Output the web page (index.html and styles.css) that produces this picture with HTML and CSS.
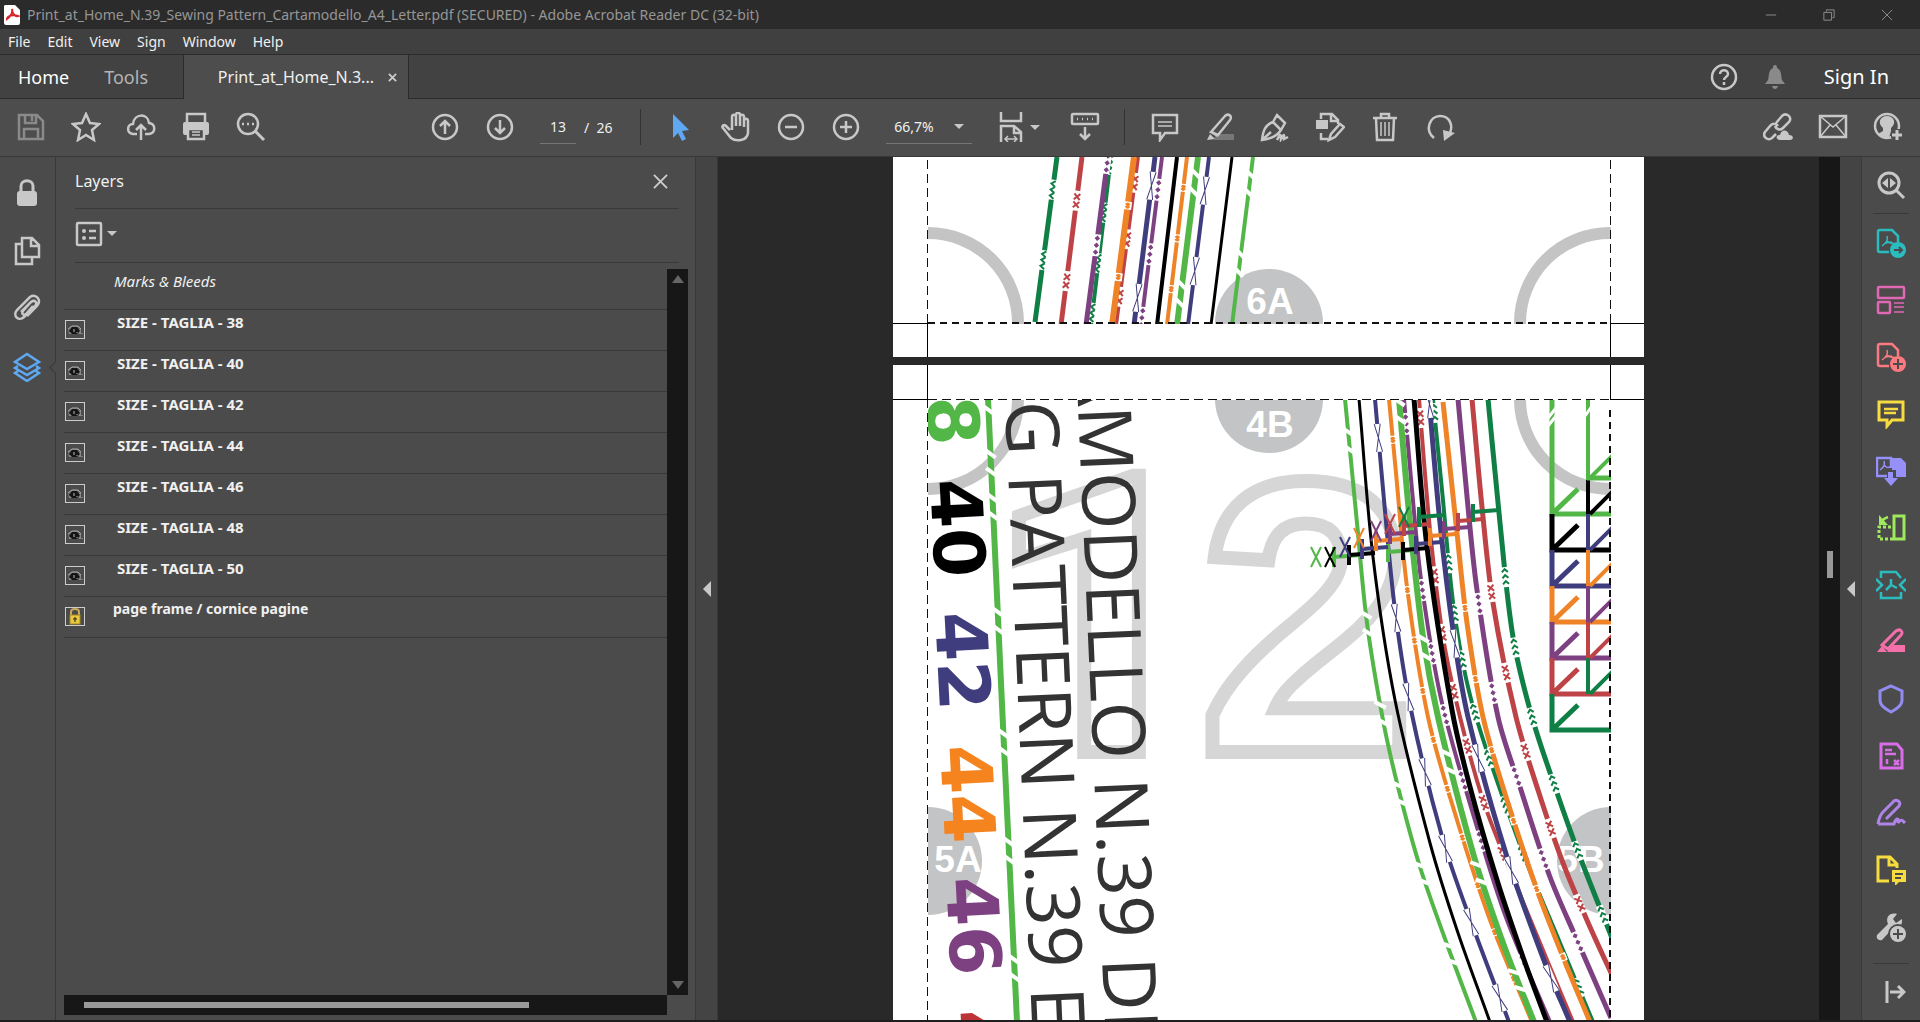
FILE: index.html
```html
<!DOCTYPE html>
<html lang="en">
<head>
    <meta charset="UTF-8">
    <meta name="viewport" content="width=device-width, initial-scale=1.0">
    <title>Print_at_Home_N.39_Sewing Pattern_Cartamodello_A4_Letter.pdf</title>
    <link rel="stylesheet" href="styles.css">
</head>
<body>
    <svg class="defs" aria-hidden="true">
        <symbol id="eye" viewBox="0 0 18 17">
            <path d="M2 11V8l3-3h7l3 3v5H3z" fill="#666"/>
            <path d="M2 8l4-3h6l3 3M3 12h8M14 8v5M16 12v1" stroke="#aaa" fill="none"/>
            <path d="M3 10l3-4h5l3 4-3 3H6z" fill="#151515"/>
            <path d="M8 8v3M11 11v1" stroke="#bbb"/>
        </symbol>
        <symbol id="pdf" viewBox="0 0 30 30">
            <path d="M13 24H4a2 2 0 0 1-2-2V4a2 2 0 0 1 2-2h12l6 6v6"/>
            <path class="thin" d="M11 8c1 4 0 6-5 10M11 13c2 2 4 3 7 2M8 16c3-2 5-2 8-2"/>
        </symbol>
    </svg>

    <header class="title-bar">
        <svg class="app-icon" viewBox="0 0 16 20"><path d="M1 0h10l5 5v13a2 2 0 0 1-2 2H2a2 2 0 0 1-2-2V1z" fill="#fff"/><path d="M8 4c1 4-1 7-5 10 0-3 6-5 11-3-3 1-6-3-6-7z" fill="none" stroke="#d8252a" stroke-width="2"/></svg>
        <span>Print_at_Home_N.39_Sewing Pattern_Cartamodello_A4_Letter.pdf (SECURED) - Adobe Acrobat Reader DC (32-bit)</span>
        <div class="window-buttons">
            <button aria-label="Minimize"><svg viewBox="0 0 14 14"><path d="M1 7h12"/></svg></button>
            <button aria-label="Restore"><svg viewBox="0 0 14 14"><path d="M1 4h9v9H1zM4 3V1h9v9h-2"/></svg></button>
            <button aria-label="Close"><svg viewBox="0 0 14 14"><path d="M1 1l12 12M13 1L1 13"/></svg></button>
        </div>
    </header>

    <nav class="menu-bar">
        <button>File</button>
        <button>Edit</button>
        <button>View</button>
        <button>Sign</button>
        <button>Window</button>
        <button>Help</button>
    </nav>

    <div class="tab-bar">
        <div class="main-tabs">
            <button class="current">Home</button>
            <button>Tools</button>
        </div>
        <div class="doc-tab">
            <span>Print_at_Home_N.3...</span>
            <button aria-label="Close tab"><svg viewBox="0 0 10 10"><path d="M1 1l8 8M9 1L1 9"/></svg></button>
        </div>
        <div class="account">
            <button aria-label="Help"><svg class="icon" viewBox="0 0 30 30"><circle cx="15" cy="15" r="12"/><path d="M11 12c0-5 8-5 8 0 0 3-4 3-4 6M15 20v3"/></svg></button>
            <button aria-label="Notifications"><svg class="icon dim" viewBox="0 0 30 30"><path class="solid" d="M15 3c2 0 2 2 2 3 5 2 4 9 5 12l3 4H5l3-4c1-3 0-10 5-12 0-1 0-3 2-3zM12 24h6c-1 4-5 4-6 0z"/></svg></button>
            <button class="sign-in">Sign In</button>
        </div>
    </div>

    <div class="toolbar">
        <button aria-label="Save"><svg class="icon dim" viewBox="0 0 30 30"><path d="M3 3h18l6 6v18H3zM9 3v8h11V3M8 27V17h14v10M16 4v5"/></svg></button>
        <button aria-label="Star"><svg class="icon" viewBox="0 0 30 30"><path d="M15 2l4 9 9 1-7 6 2 10-8-5-8 5 2-10-7-6 9-1z"/></svg></button>
        <button aria-label="Upload"><svg class="icon" viewBox="0 0 30 30"><path d="M11 22H7c-7-1-6-10 0-10 1-11 15-11 16-1 7 1 7 10 0 11h-4M15 28V14M10 18l5-5 5 5"/></svg></button>
        <button aria-label="Print"><svg class="icon" viewBox="0 0 30 30"><path d="M6 10V2h18v8"/><path class="solid" d="M2 12a2 2 0 0 1 2-2h22a2 2 0 0 1 2 2v9a2 2 0 0 1-2 2h-2v-6H6v6H4a2 2 0 0 1-2-2z"/><path d="M7 17h16v10H7z"/><path class="thin" d="M11 20h8M11 23h8"/></svg></button>
        <button aria-label="Find"><svg class="icon" viewBox="0 0 30 30"><circle cx="12" cy="12" r="10"/><path class="heavy" d="M19 19l9 9"/><path d="M6 12h2M11 12h2M16 12h2"/></svg></button>
        <button class="page-up" aria-label="Previous page"><svg class="icon" viewBox="0 0 30 30"><circle cx="15" cy="15" r="12"/><path d="M15 22V9M10 14l5-5 5 5"/></svg></button>
        <button aria-label="Next page"><svg class="icon" viewBox="0 0 30 30"><circle cx="15" cy="15" r="12"/><path d="M15 8v13M10 16l5 5 5-5"/></svg></button>
        <input class="page-number" aria-label="Page number" value="13">
        <span class="page-total">/&nbsp; 26</span>
        <i class="divider"></i>
        <button aria-label="Select"><svg class="icon blue" viewBox="0 0 30 30"><path class="solid" d="M7 2l16 16-7 1 4 8-4 2-4-8-5 5z"/></svg></button>
        <button aria-label="Pan"><svg class="icon" viewBox="0 0 30 30"><path d="M9 18L5 14c-2-2-5 0-3 2l8 10c5 4 16 3 17-5V9c0-3-4-3-4 0v6V5c0-3-4-3-4 0v9V3c0-3-4-3-4 0v11V5c0-3-4-3-4 0v13"/></svg></button>
        <button aria-label="Zoom out"><svg class="icon" viewBox="0 0 30 30"><circle cx="15" cy="15" r="12"/><path d="M9 15h12"/></svg></button>
        <button aria-label="Zoom in"><svg class="icon" viewBox="0 0 30 30"><circle cx="15" cy="15" r="12"/><path d="M9 15h12M15 9v12"/></svg></button>
        <button class="zoom-level">66,7%<i class="caret"></i></button>
        <button class="fit" aria-label="Fit width"><svg class="icon" viewBox="0 0 30 30"><path d="M5 0v9h20V0M5 30V14h13l7 6v10M18 14v7h7"/><path class="thin" d="M9 27h12M12 24l-3 3 3 3M18 24l3 3-3 3"/></svg><i class="caret"></i></button>
        <button aria-label="Read mode"><svg class="icon" viewBox="0 0 30 30"><rect x="2" y="2" width="26" height="10" rx="1"/><path d="M7 7h1M12 7h1M17 7h1M22 7h1M15 15v12M10 22l5 5 5-5"/></svg></button>
        <i class="divider late"></i>
        <button aria-label="Comment"><svg class="icon" viewBox="0 0 30 30"><path d="M3 3h24v18H15l-5 7v-7H3z"/><path class="thin" d="M8 10h14M8 14h14"/></svg></button>
        <button aria-label="Highlight"><svg class="icon" viewBox="0 0 30 30"><path class="faint" d="M11 22h18v6H9z"/><path d="M6 20L20 4c3-3 8 0 5 4L13 23zM6 20l7 4"/><path class="solid" d="M5 22l5 5-8 1z"/></svg></button>
        <button aria-label="Sign"><svg class="icon" viewBox="0 0 30 30"><path d="M2 28C3 19 5 13 13 10l8 8c-4 6-9 9-19 10zM2 28l9-8M13 10l4-7 8 8-4 7M17 28c4-8 4-5 4-1 4-7 3-3 3 0l4-2"/></svg></button>
        <button aria-label="Edit pages"><svg class="icon" viewBox="0 0 30 30"><path class="solid" d="M1 8h12v9H1z"/><path d="M6 7V2h11l6 6v4M16 2v7h7M6 21v6h7M14 28l2-6 9-10 4 3-9 10z"/></svg></button>
        <button aria-label="Delete"><svg class="icon" viewBox="0 0 30 30"><path d="M3 6h24M11 6V2h8v4M6 6l1 22h16l1-22"/><path class="thin" d="M11 10v14M15 10v14M19 10v14"/></svg></button>
        <button aria-label="Rotate"><svg class="icon" viewBox="0 0 30 30"><path d="M9 26C-1 18 5 4 15 4c10 0 14 10 9 19"/><path class="solid" d="M18 18l12 3-11 8z"/></svg></button>
        <div class="share">
            <button aria-label="Share link"><svg class="icon" viewBox="0 0 30 30"><path d="M13 11l6-7c4-4 11 1 7 6l-6 6c-3 3-7 1-8-2M15 14c-2-3-6-3-8 0l-5 6c-3 5 3 9 7 6l4-4"/><path class="solid" d="M17 28c-5 0-4-6 0-5 1-6 8-6 9 0 5 0 5 5 1 5z"/></svg></button>
            <button aria-label="Mail"><svg class="icon" viewBox="0 0 30 30"><rect x="2" y="4" width="26" height="21"/><path class="thin" d="M2 4l13 11L28 4M2 25l10-12M28 25L18 13"/></svg></button>
            <button aria-label="Add people"><svg class="icon" viewBox="0 0 30 30"><circle cx="14" cy="14" r="12"/><path class="solid" d="M5 22l5-3v-3c-6-5-3-12 4-12s10 7 4 12v3l-2 7H9z"/><path class="halo" d="M24 17v12M18 23h12"/><path class="heavy" d="M24 18v10M19 23h10"/></svg></button>
        </div>
    </div>

    <main>
        <nav class="left-rail">
            <button aria-label="Security"><svg class="icon" viewBox="0 0 30 30"><path class="heavy" d="M9 14V8c0-7 12-7 12 0v6"/><rect class="solid" x="5" y="13" width="20" height="15" rx="3"/></svg></button>
            <button aria-label="Pages"><svg class="icon" viewBox="0 0 30 30"><path d="M10 2h10l7 7v12H10zM19 2v8h8M9 8H4v20h16v-6"/></svg></button>
            <button aria-label="Attachments"><svg class="icon" viewBox="0 0 30 30"><path d="M9 18L19 8c4-3 7 1 4 4L12 23c-5 5-12-1-7-7L18 3c6-4 12 3 7 9L15 22M19 8l-8 9c-2 3 1 5 3 3l7-8"/></svg></button>
            <button class="selected" aria-label="Layers"><svg class="icon blue" viewBox="0 0 30 30"><path d="M15 2l12 8-12 7L3 10zM6 14l-3 2 12 7 12-7-3-2M6 19l-3 2 12 8 12-8-3-2"/></svg></button>
        </nav>

        <aside class="panel">
            <div class="panel-title">
                <h2>Layers</h2>
                <button aria-label="Close panel"><svg viewBox="0 0 16 16"><path d="M1 1l14 14M15 1L1 15"/></svg></button>
            </div>
            <div class="panel-options">
                <button aria-label="Options"><svg class="icon" viewBox="0 0 30 30"><rect x="3" y="4" width="24" height="22" rx="1"/><circle class="solid" cx="10" cy="12" r="2"/><circle class="solid" cx="10" cy="19" r="2"/><path d="M15 12h7M15 19h7"/></svg><i class="caret"></i></button>
            </div>
            <div class="panel-body">
                <ul class="layers">
                    <li class="bleeds">Marks &amp; Bleeds</li>
                    <li><button aria-label="Toggle layer"><svg><use href="#eye"/></svg></button><span>SIZE - TAGLIA - 38</span></li>
                    <li><button aria-label="Toggle layer"><svg><use href="#eye"/></svg></button><span>SIZE - TAGLIA - 40</span></li>
                    <li><button aria-label="Toggle layer"><svg><use href="#eye"/></svg></button><span>SIZE - TAGLIA - 42</span></li>
                    <li><button aria-label="Toggle layer"><svg><use href="#eye"/></svg></button><span>SIZE - TAGLIA - 44</span></li>
                    <li><button aria-label="Toggle layer"><svg><use href="#eye"/></svg></button><span>SIZE - TAGLIA - 46</span></li>
                    <li><button aria-label="Toggle layer"><svg><use href="#eye"/></svg></button><span>SIZE - TAGLIA - 48</span></li>
                    <li><button aria-label="Toggle layer"><svg><use href="#eye"/></svg></button><span>SIZE - TAGLIA - 50</span></li>
                    <li class="frame"><button aria-label="Locked layer"><svg viewBox="0 0 18 17"><path d="M5 8V4c0-4 8-4 8 0v4" fill="none" stroke="#c9a95a" stroke-width="2"/><rect x="4" y="7" width="10" height="9" fill="#e8c93c" stroke="#a58a26"/><path d="M9 9v5M7 11h4" stroke="#222"/></svg></button><span>page frame / cornice pagine</span></li>
                </ul>
                <div class="scroll-y"><i class="up"></i><i class="down"></i></div>
                <div class="scroll-x"><i></i></div>
            </div>
        </aside>

        <button class="splitter" aria-label="Collapse panel"><i></i></button>

        <section class="document">
            <svg class="page" id="page13" width="751" height="200" viewBox="893 157 751 200">
                <clipPath id="clip13"><rect x="928" y="150" width="683" height="174"/></clipPath>
                <g clip-path="url(#clip13)">
                    <circle class="ring" cx="928" cy="323" r="90"/>
                    <circle class="ring" cx="1610" cy="323" r="90"/>
                    <circle class="disc" cx="1269" cy="323" r="54"/>
                    <g class="lines"></g>
                    <text class="mark" x="1270" y="314">6A</text>
                </g>
                <path class="cut" d="M927.500 160V323M1610.500 160V323"/>
                <path class="cut bold" d="M928 323H1611"/>
                <path class="crop" d="M893 323.500h35M1610 323.500h34M927.500 323v34M1610.500 323v34"/>
            </svg>
            <svg class="page" id="page14" width="751" height="655" viewBox="893 365 751 655">
                <clipPath id="clip14"><rect x="928" y="400" width="683" height="620"/></clipPath>
                <g clip-path="url(#clip14)">
                    <circle class="ring" cx="928" cy="399" r="90"/>
                    <circle class="ring" cx="1610" cy="399" r="90"/>
                    <circle class="disc" cx="1269" cy="399" r="54"/>
                    <circle class="disc" cx="928" cy="861" r="54"/>
                    <circle class="disc" cx="1611" cy="861" r="54"/>
                    <text class="mark" x="1270" y="437">4B</text>
                    <text class="mark" x="958" y="872">5A</text>
                    <text class="mark" x="1581" y="872">5B</text>
                    <text class="sheet one" x="987" y="752">1</text>
                    <text class="sheet" x="1199" y="752">2</text>
                    <g class="legend"></g>
                    <g class="lines"></g>
                    <text class="size" fill="#53b748" transform="translate(924 348) rotate(87)">38</text>
                    <text class="size" fill="#000" transform="translate(930 480) rotate(87)">40</text>
                    <text class="size" fill="#403d7e" transform="translate(935 613) rotate(87)">42</text>
                    <text class="size" fill="#f5841f" transform="translate(940 746) rotate(87)">44</text>
                    <text class="size" fill="#7d4182" transform="translate(946 878) rotate(87)">46</text>
                    <text class="size" fill="#bd3438" transform="translate(951 1011) rotate(87)">48</text>
                    <text class="pattern" transform="translate(1005 402) rotate(87.500)">G PATTERN N.39 E</text>
                    <text class="pattern" transform="translate(1076 360) rotate(87.500)">AMODELLO N.39 DI</text>
                </g>
                <path class="cut" d="M927.500 399V1020M928 399.500H1611"/>
                <path class="cut bold" d="M1610 410V1020"/>
                <path class="crop" d="M893 399.500h35M1610 399.500h34M927.500 365v34M1610.500 365v34"/>
            </svg>
        </section>

        <div class="doc-scroll"><i></i></div>
        <button class="splitter" aria-label="Collapse tools"><i></i></button>

        <nav class="right-rail">
            <button class="first" aria-label="Search tools"><svg class="icon" viewBox="0 0 30 30"><circle class="heavy" cx="13" cy="13" r="10"/><path class="heavy" d="M20 20l8 8"/><path class="solid" d="M12 8v10l-6-5zM14 8v10l6-5z"/></svg></button>
            <button class="teal" aria-label="Export PDF"><svg class="icon" viewBox="0 0 30 30"><use href="#pdf"/><circle class="solid" cx="22" cy="22" r="8"/><path class="cutout" d="M18 22h8M23 19l3 3-3 3"/></svg></button>
            <button class="pink" aria-label="Organize pages"><svg class="icon" viewBox="0 0 30 30"><rect x="2" y="2" width="26" height="11" rx="1"/><rect x="2" y="17" width="12" height="11" rx="1"/><path class="thin" d="M18 18h10M18 22h10M18 27h10"/></svg></button>
            <button class="coral" aria-label="Create PDF"><svg class="icon" viewBox="0 0 30 30"><use href="#pdf"/><circle class="solid" cx="22" cy="22" r="8"/><path class="cutout" d="M17 22h10M22 17v10"/></svg></button>
            <button class="yellow" aria-label="Comment tool"><svg class="icon" viewBox="0 0 30 30"><path class="heavy" d="M3 3h24v18H16l-5 6v-6H3z"/><path d="M8 10h14M8 14h12"/></svg></button>
            <button class="violet" aria-label="Combine files"><svg class="icon" viewBox="0 0 30 30"><path d="M11 20H1V2h14v10"/><path class="thin" d="M8 5c1 4 0 6-4 9M8 9c2 2 3 3 6 2"/><path class="solid" d="M16 2h9l5 5v14H20v-7h-4zM12 16h5v6h5l-7 8-7-8h4z"/></svg></button>
            <button class="lime" aria-label="Compress"><svg class="icon" viewBox="0 0 30 30"><rect class="heavy" x="18" y="3" width="10" height="23"/><path class="dotted heavy" d="M15 14H3v12h14"/><path d="M5 9c2-3 4-4 7-5"/><path class="solid" d="M3 2v10h9z"/></svg></button>
            <button class="teal" aria-label="Compress PDF"><svg class="icon" viewBox="0 0 30 30"><path d="M5 8V2h15l5 6M5 22v6h20v-6M0 9l6 6-6 6M30 9l-6 6 6 6M15 9v6l-5 5M15 15l6 3"/></svg></button>
            <button class="rose" aria-label="Redact"><svg class="icon" viewBox="0 0 30 30"><path class="solid" d="M17 18h12v7H11zM1 25l5-6 5 6z"/><path class="heavy" d="M6 18L20 4c4-3 8 1 5 4L12 22z"/></svg></button>
            <button class="indigo" aria-label="Protect"><svg class="icon" viewBox="0 0 30 30"><path class="heavy" d="M15 2l11 5v9c0 6-6 9-11 12C10 25 4 22 4 16V7z"/></svg></button>
            <button class="orchid" aria-label="Prepare form"><svg class="icon" viewBox="0 0 30 30"><path class="heavy" d="M5 3h16l5 6v18H5z"/><path d="M9 9h7M9 13h11M18 19l5 5M23 19l-5 5M11 18v5"/></svg></button>
            <button class="lilac" aria-label="Fill and sign"><svg class="icon" viewBox="0 0 30 30"><path class="heavy" d="M2 26c1-6 2-9 5-12L17 4c3-4 9 0 6 4L10 21M2 26h16c2-6 5-7 4-1 3-5 5-2 7 0"/></svg></button>
            <button class="yellow" aria-label="Send for comments"><svg class="icon" viewBox="0 0 30 30"><path class="heavy" d="M13 26H2V2h12l7 7v4M13 2v8h8"/><path class="solid" d="M16 15h14v12h-7l-4 4v-4h-3z"/><path class="cutout" d="M19 19h8M19 23h6"/></svg></button>
            <button aria-label="More tools"><svg class="icon" viewBox="0 0 30 30"><path class="solid" d="M1 23L12 12C9 5 14 0 21 2l-4 5 3 4 6-4c1 7-4 10-9 9L6 28c-4 1-6-2-5-5z"/><circle class="cutout" cx="22" cy="22" r="9"/><circle class="solid" cx="22" cy="22" r="8"/><path class="cutout" d="M17 22h10M22 17v10"/></svg></button>
            <button class="last" aria-label="Expand pane"><svg class="icon" viewBox="0 0 30 30"><path class="heavy" d="M11 4v22M14 15h14M22 9l6 6-6 6"/></svg></button>
        </nav>
    </main>

    <script>
        const GREEN = '#53b748', DARK = '#0f7f46', RED = '#bd4346', PURPLE = '#7d4182',
              NAVY = '#403d7e', ORANGE = '#ee8427', BLACK = '#000';

        // one motif per garment size, drawn along the x axis
        const motifs = {
            chev: { gap: 20, d: 'M-5 -3L-8 0L-5 3M1 -3L-2 0L1 3M7 -3L4 0L7 3' },
            side: { gap: 20, d: 'M-9 -2L-6 2L-3 -2M-3 -2L0 2L3 -2M3 -2L6 2L9 -2' },
            xx: { gap: 20, d: 'M-7 -3L-1 3M-1 -3L-7 3M1 -3L7 3M7 -3L1 3' },
            dots: { gap: 22, d: 'M-9 0l2 -2l2 2l-2 2zM-2 0l2 -2l2 2l-2 2zM5 0l2 -2l2 2l-2 2z', fill: true },
            star: { gap: 8, d: 'M-3 0H3M-2 -2L2 2M-2 2L2 -2' },
            cross: { gap: 28, d: 'M-14 -3L14 3M-14 3L14 -3', w: 1 },
            slash: { slash: true }
        };

        function make(parent, name, attrs) {
            const el = document.createElementNS('http://www.w3.org/2000/svg', name);
            for (const k in attrs) el.setAttribute(k, attrs[k]);
            parent.appendChild(el);
            return el;
        }

        // smooth path through the points, which all run down the page
        function curve(p) {
            const slope = i => {
                const a = Math.max(i - 2, 0), b = Math.min(i + 2, p.length - 2);
                return (p[b] - p[a]) / (p[b + 1] - p[a + 1]);
            };
            let d = `M${p[0]} ${p[1]}`;
            for (let i = 0; i + 3 < p.length; i += 2) {
                const h = (p[i + 3] - p[i + 1]) / 3;
                d += `C${p[i] + slope(i) * h} ${p[i + 1] + h} ${p[i + 2] - slope(i + 2) * h} ${p[i + 3] - h} ${p[i + 2]} ${p[i + 3]}`;
            }
            return d;
        }

        function drawLine(g, [color, width, points, type, ys]) {
            const path = make(g, 'path', { d: curve(points), stroke: color, 'stroke-width': width });
            if (!type) return;
            const m = motifs[type], total = path.getTotalLength();
            ys.forEach(y => {
                let len = 2;
                while (len < total && path.getPointAtLength(len).y < y) len += 1;
                const p = path.getPointAtLength(len), q = path.getPointAtLength(len - 2);
                const angle = Math.atan2(p.y - q.y, p.x - q.x) * 180 / Math.PI;
                const mark = make(g, 'g', { transform: `translate(${p.x} ${p.y}) rotate(${angle})` });
                if (m.slash) {
                    make(mark, 'path', { d: 'M-13 5L-5 -5M5 5L13 -5', stroke: '#fff', 'stroke-width': 4 });
                    return;
                }
                make(mark, 'path', { d: `M${-m.gap / 2} 0h${m.gap}`, stroke: '#fff', 'stroke-width': width + 2 });
                const motif = make(mark, 'path', { d: m.d, stroke: color, 'stroke-width': m.w || (m.fill ? 1 : 2) });
                if (m.fill) motif.style.fill = color;
            });
        }

        const top13 = [
            [DARK, 5, [1057, 157, 1035, 322], 'side', [189, 260]],
            [RED, 5, [1082, 157, 1061, 325], 'xx', [200, 281]],
            [DARK, 4, [1111, 157, 1091, 325], 'side', [164, 212, 263, 312]],
            [PURPLE, 5, [1108, 157, 1086, 325], 'dots', [162, 245]],
            [RED, 4, [1138, 157, 1116, 325], 'xx', [182, 239, 296]],
            [ORANGE, 6, [1134, 157, 1112, 325], 'star', [205, 276]],
            [NAVY, 5, [1155, 157, 1134, 325], 'cross', [185, 297]],
            [PURPLE, 4, [1162, 157, 1141, 325], 'dots', [189, 254, 317]],
            [BLACK, 4, [1177, 157, 1157, 325]],
            [ORANGE, 4, [1187, 157, 1167, 325], 'star', [187, 238, 289]],
            [GREEN, 6, [1198, 157, 1177, 325], 'slash', [182, 293]],
            [NAVY, 4, [1209, 157, 1188, 325], 'cross', [190, 271]],
            [BLACK, 3, [1232, 157, 1211, 325]],
            [GREEN, 4, [1253, 157, 1232, 325], 'slash', [183, 263]]
        ];

        const main14 = [
            [GREEN, 6, [988, 399, 1001, 683, 1017, 1022], 'slash', [396, 462, 506, 620, 742, 850, 968]],
            [GREEN, 4, [1345, 399, 1357, 523, 1367, 623, 1383, 720, 1398, 787, 1420, 867, 1448, 947, 1476, 1022], 'slash', [440, 623, 713, 793, 873, 953]],
            [BLACK, 3, [1359, 399, 1373, 557, 1395, 700, 1430, 843, 1457, 930, 1490, 1022]],
            [NAVY, 4, [1375, 399, 1384, 500, 1395, 610, 1411, 710, 1443, 840, 1473, 927, 1509, 1022], 'cross', [437, 617, 697, 772, 848, 922, 997]],
            [ORANGE, 4, [1389, 399, 1396, 473, 1407, 587, 1428, 717, 1457, 820, 1490, 920, 1532, 1022], 'star', [439, 590, 640, 690, 739, 788, 837, 885, 932, 978]],
            [PURPLE, 4, [1404, 399, 1412, 490, 1422, 587, 1442, 703, 1480, 837, 1507, 920, 1550, 1022], 'dots', [423, 590, 653, 715, 780, 840, 963]],
            [GREEN, 6, [1399, 399, 1410, 523, 1423, 637, 1438, 717, 1473, 853, 1503, 943, 1534, 1022], 'slash', [410, 647, 762, 873, 980]],
            [RED, 4, [1419, 399, 1430, 530, 1443, 637, 1460, 717, 1482, 797, 1503, 853, 1547, 960, 1573, 1022], 'xx', [417, 576, 633, 691, 746, 802, 853]],
            [BLACK, 5, [1414, 399, 1427, 547, 1452, 710, 1470, 787, 1497, 880, 1523, 957, 1547, 1022]],
            [DARK, 4, [1433, 399, 1442, 490, 1455, 617, 1474, 710, 1523, 853, 1560, 943, 1593, 1022], 'chev', [412, 563, 613, 660, 712, 758, 805, 853, 987]],
            [NAVY, 5, [1429, 399, 1440, 523, 1453, 630, 1468, 717, 1507, 857, 1545, 963, 1570, 1022], 'cross', [403, 643, 758, 870, 978]],
            [ORANGE, 5, [1443, 402, 1457, 533, 1467, 623, 1483, 717, 1507, 800, 1537, 890, 1563, 957, 1590, 1022], 'star', [607, 679, 750, 820, 889, 957]],
            [PURPLE, 5, [1458, 399, 1468, 507, 1477, 590, 1498, 717, 1520, 787, 1550, 877, 1577, 940, 1611, 1018], 'dots', [603, 692, 776, 859, 942]],
            [RED, 5, [1472, 399, 1482, 507, 1493, 603, 1516, 717, 1538, 790, 1563, 863, 1590, 927, 1612, 975], 'xx', [592, 672, 751, 828, 903]],
            [DARK, 5, [1488, 399, 1500, 523, 1513, 637, 1532, 717, 1555, 787, 1580, 857, 1612, 938], 'chev', [577, 647, 717, 783, 850, 915]]
        ];

        const lines13 = document.querySelector('#page13 .lines');
        const lines14 = document.querySelector('#page14 .lines');
        top13.forEach(l => drawLine(lines13, l));
        main14.forEach(l => drawLine(lines14, l));

        // notches and the X that names each of them
        const notches = [
            [GREEN, 1334, 557, 1316, 557], [BLACK, 1349, 555, 1330, 557], [NAVY, 1362, 549, 1345, 547],
            [ORANGE, 1376, 541, 1359, 538], [PURPLE, 1390, 534, 1376, 531], [RED, 1404, 526, 1390, 524],
            [DARK, 1419, 517, 1404, 517]
        ];
        notches.forEach(([color, x, y, lx, ly]) => {
            make(lines14, 'path', { d: `M${lx - 5} ${ly - 10}l10 20m0 -20l-10 20`, stroke: color, 'stroke-width': 2 });
            make(lines14, 'path', { d: `M${x} ${y - 10}v20M${x} ${y}l26 -2`, stroke: color, 'stroke-width': 4 });
            make(lines14, 'path', { d: `M${x + 54} ${y - 13}v18M${x + 54} ${y - 5}l26 -2`, stroke: color, 'stroke-width': 4 });
        });

        const legend = document.querySelector('#page14 .legend');
        const sizes = [GREEN, BLACK, NAVY, ORANGE, PURPLE, RED, DARK];
        sizes.forEach((color, i) => {
            const y = 514 + i * 36, prev = i ? y - 36 : 400;
            const iy = i ? y - 36 : 478, iprev = i > 1 ? iy - 36 : i ? 480 : 400;
            make(legend, 'path', { d: `M1588 ${iprev}V${i ? iy : 480}M1590 ${iy}l24 -24`, stroke: color, 'stroke-width': 4 });
            make(legend, 'path', { d: `M1552 ${prev}V${y}H1612M1552 ${y}l26 -25`, stroke: color, 'stroke-width': 5 });
        });
        make(legend, 'path', { d: 'M1587 478H1612', stroke: GREEN, 'stroke-width': 5 });
        make(legend, 'path', { d: 'M1548 418l8 -10M1548 426l8 -10M1585 416l7 -10', stroke: '#fff', 'stroke-width': 3 });
    </script>
</body>
</html>
```
FILE: styles.css
```css
* { box-sizing: border-box; }
body { margin: 0; height: 100vh; display: flex; flex-direction: column; overflow: hidden; background: #1e1e1e; color: #f0f0f0; font-family: "Noto Sans", "Open Sans", sans-serif; font-size: 14px; }
button { margin: 0; padding: 0; border: 0; background: none; color: inherit; font: inherit; display: flex; align-items: center; justify-content: center; }
svg { display: block; flex: none; }
.defs { width: 0; height: 0; position: absolute; }

/* icons */
.icon { width: 30px; height: 30px; fill: none; stroke: currentColor; stroke-width: 2.5; color: #c8c8c8; }
.icon .solid { fill: currentColor; stroke: none; }
.icon .thin, #pdf .thin { stroke-width: 1.5; }
.icon .heavy { stroke-width: 3; }
.icon .faint { fill: #777; stroke: none; }
.icon .cutout { stroke: #4b4b4b; stroke-width: 2; }
.icon .halo { stroke: #4d4d4d; stroke-width: 6; }
.icon .dotted { stroke-dasharray: 3 2; }
.icon.dim { color: #8a8a8a; }
.icon.blue { color: #5ea9f2; }
.caret { border: 5px solid transparent; border-top-color: #c8c8c8; border-bottom: 0; }

/* title and menus */
.title-bar { height: 29px; display: flex; align-items: center; background: #2b2b2b; color: #969696; padding: 0 4px; flex: none; }
.title-bar span { margin-left: 7px; white-space: nowrap; }
.app-icon { width: 16px; height: 20px; }
.window-buttons { display: flex; margin-left: auto; }
.window-buttons button { width: 58px; height: 29px; }
.window-buttons svg { width: 12px; height: 12px; fill: none; stroke: #999; }
.menu-bar { height: 25px; display: flex; gap: 17px; padding-left: 8px; background: #404040; flex: none; }
.tab-bar { height: 45px; display: flex; background: #424242; border-top: 1px solid #2b2b2b; flex: none; }
.main-tabs { width: 184px; display: flex; gap: 35px; padding: 0 18px; border-right: 1px solid #2b2b2b; border-bottom: 1px solid #2b2b2b; font-size: 18px; color: #b4b4b4; }
.main-tabs .current { color: #fff; }
.doc-tab { width: 224px; display: flex; align-items: center; justify-content: flex-end; gap: 14px; padding-right: 11px; background: #4d4d4d; font-size: 16px; }
.doc-tab svg { width: 9px; height: 9px; stroke: #ccc; stroke-width: 2px; }
.account { flex: 1; display: flex; align-items: center; justify-content: flex-end; gap: 21px; padding-right: 31px; border-left: 1px solid #2b2b2b; border-bottom: 1px solid #2b2b2b; }
.sign-in { font-size: 20px; margin-left: 13px; color: #fff; }

/* toolbar */
.toolbar { height: 58px; display: flex; align-items: center; padding: 0 5px 1px 3px; background: #4d4d4d; border-bottom: 1px solid #383838; flex: none; }
.toolbar button { width: 55px; height: 55px; flex: none; }
.toolbar .page-up { margin-left: 139px; }
.page-number { width: 36px; height: 34px; margin-left: 13px; padding: 0; text-align: center; border: 0; border-bottom: 1px solid #757575; background: none; color: #f0f0f0; font: inherit; }
.page-total { margin-left: 8px; width: 32px; white-space: nowrap; }
.divider { width: 1px; height: 36px; background: #333; margin: 0 12px 0 24px; }
.divider.late { margin: 0 12px; }
.toolbar .zoom-level { width: 86px; height: 34px; gap: 20px; margin-left: 13px; border-bottom: 1px solid #757575; }
.toolbar .fit { width: 60px; margin: 0 1px 0 24px; justify-content: flex-start; }
.fit .caret { margin-left: 4px; }
.share { display: flex; margin-left: auto; }

main { flex: 1; min-height: 0; display: flex; margin-bottom: 2px; background: #4b4b4b; }
.left-rail { width: 56px; padding-top: 7px; border-right: 1px solid #393939; flex: none; }
.left-rail button { width: 54px; height: 58px; }
.left-rail .selected { width: 100%; padding-right: 1px; position: relative; }
.left-rail .selected::after { content: ""; position: absolute; right: -5px; width: 8px; height: 8px; border: 1px solid #393939; border-width: 0 0 1px 1px; background: #4b4b4b; transform: rotate(45deg); }

/* layers panel */
.panel { width: 640px; display: flex; flex-direction: column; padding: 0 7px 5px 8px; border-right: 1px solid #393939; flex: none; }
.panel-title { height: 52px; display: flex; align-items: center; justify-content: space-between; margin: 0 9px 0 11px; padding: 0 11px 3px 0; border-bottom: 1px solid #393939; }
.panel-title h2 { margin: 0; font-size: 16px; font-weight: normal; }
.panel-title svg { width: 15px; height: 15px; stroke: #ccc; stroke-width: 2px; }
.panel-options { height: 54px; display: flex; align-items: center; margin: 0 9px 0 11px; padding-bottom: 4px; border-bottom: 1px solid #393939; }
.panel-options button { gap: 3px; margin-left: -1px; }
.panel-body { flex: 1; min-height: 0; margin-top: 6px; display: grid; grid-template: 1fr 20px / 1fr 21px; }
.layers { list-style: none; margin: 0; padding: 0; }
.layers li { height: 41px; display: flex; gap: 32px; border-bottom: 1px solid #393939; font-weight: bold; font-size: 15px; line-height: 24px; }
.layers button { width: 20px; height: 19px; margin: 10px 0 0 1px; border: 1px solid #ccc; }
.layers button svg { width: 18px; height: 17px; }
.layers .bleeds { padding-left: 50px; font-weight: normal; font-style: italic; }
.layers .frame { gap: 28px; font-size: 14px; }
.scroll-y { display: flex; flex-direction: column; justify-content: space-between; align-items: center; padding: 6px 0; background: #171717; }
.scroll-y i { border: 6px solid transparent; }
.scroll-y .up { border-top: 0; border-bottom: 8px solid #666; }
.scroll-y .down { border-bottom: 0; border-top: 8px solid #666; }
.scroll-x { background: #171717; padding: 7px 20px; }
.scroll-x i { display: block; width: 79%; height: 6px; background: #999; }
.splitter { width: 22px; background: #444; border-right: 1px solid #393939; flex: none; }
.splitter i { border: 8px solid transparent; border-left: 0; border-right-color: #c8c8c8; }

/* document */
.document { flex: 1; min-width: 0; background: #292929; display: flex; flex-direction: column; align-items: center; gap: 8px; overflow: hidden; }
.page { background: #fff; }
.ring { fill: none; stroke: #c4c4c4; stroke-width: 12px; }
.disc { fill: #c2c4c6; }
.mark { font: bold 37px "Liberation Sans", sans-serif; fill: #fff; text-anchor: middle; }
.sheet { font: bold 388px "Liberation Sans", sans-serif; fill: none; stroke: #d6d6d6; stroke-width: 14px; }
.sheet.one { font-family: Roboto, sans-serif; }
.size { font: bold 71px "DejaVu Sans", sans-serif; }
.pattern { font: 74px "Open Sans", sans-serif; fill: #333; }
.cut { fill: none; stroke: #111; stroke-width: 1px; stroke-dasharray: 9 5; }
.cut.bold { stroke-width: 2px; stroke-dasharray: 7 5; }
.crop { fill: none; stroke: #000; }
.lines path, .legend path { fill: none; }
.doc-scroll { width: 21px; display: flex; justify-content: center; background: #171717; flex: none; }
.doc-scroll i { width: 6px; height: 27px; margin-top: 394px; background: #999; }

/* tools pane */
.right-rail { width: 58px; display: flex; flex-direction: column; align-items: center; flex: none; }
.right-rail button { width: 36px; height: 57px; flex: none; }
.right-rail .first { border-bottom: 1px solid #393939; }
.right-rail .last { margin-top: auto; border-top: 1px solid #393939; }
.teal .icon { color: #2bbcc0; }
.pink .icon { color: #e168b4; }
.coral .icon { color: #fa7a80; }
.yellow .icon { color: #f7dc3f; }
.violet .icon { color: #9590fa; }
.lime .icon { color: #9eea5c; }
.rose .icon { color: #f56fab; }
.indigo .icon { color: #928cf0; }
.orchid .icon { color: #d96ce8; }
.lilac .icon { color: #ae84e8; }
```
